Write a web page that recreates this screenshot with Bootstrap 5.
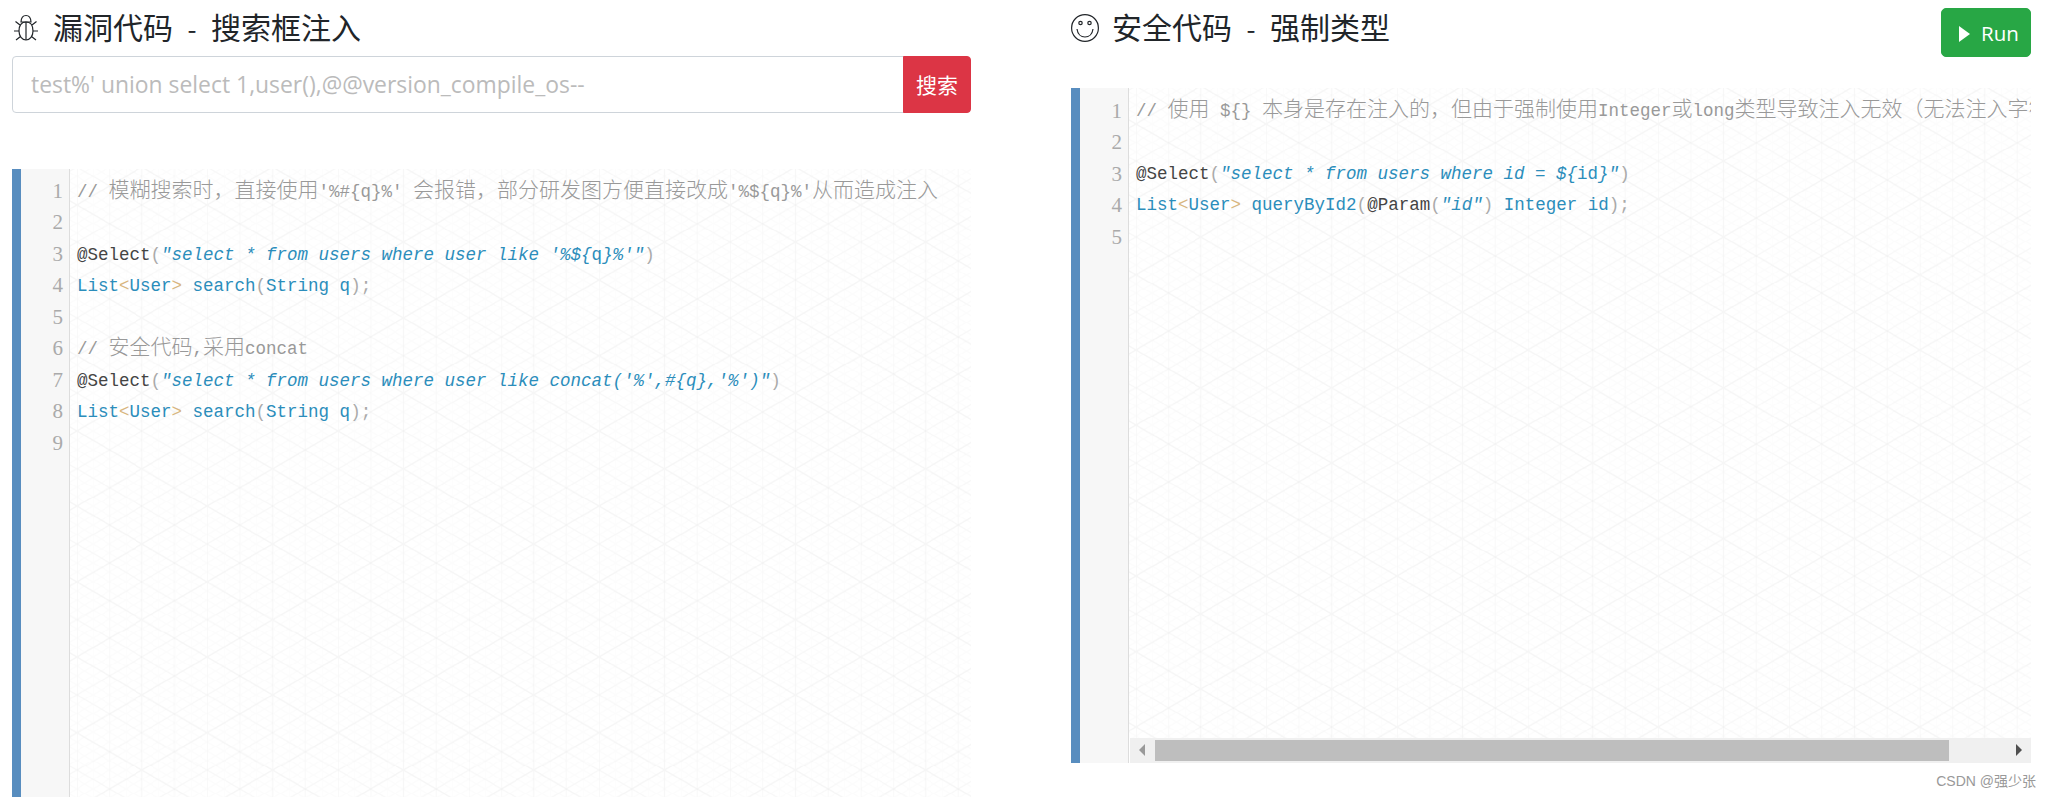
<!DOCTYPE html>
<html lang="zh"><head><meta charset="utf-8"><title>SQL</title>
<link href="https://cdn.jsdelivr.net/npm/bootstrap@5.3.0/dist/css/bootstrap.min.css" rel="stylesheet">
<style>
html,body{height:797px;overflow:hidden;background:#fff}
body{font-family:"Open Sans","Noto Sans CJK SC",sans-serif;color:#212529}
.page-wrap{padding:0 21px 0 12px;gap:100px}
.pane{flex:1 1 0;min-width:0}
.pane-left{flex:0 0 959px}
.pane-title{font-size:30px;line-height:40px;font-weight:400;margin:0;padding-top:6px;height:56px;font-family:"Noto Sans CJK SC",sans-serif;white-space:pre;color:#212529}
.pane-title svg{margin:-6px 14px 0 1px;vertical-align:middle}
.dash{margin:0 14.500px;font-size:26px}
.right-title{padding-top:6px;height:88px}
.right-title svg{margin-left:0;margin-right:13px}
.search-box{height:57px;width:100%}
.search-box .form-control{font-size:22.900px;border-color:#ced4da;border-radius:4px 0 0 4px;padding:2px 18px 0;font-family:"Open Sans",sans-serif}
.search-box .form-control::placeholder{color:#bbb}
.search-box .btn{width:68px;font-size:21px;padding:0;border-radius:0 4px 4px 0;font-family:"Noto Sans CJK SC",sans-serif;--bs-btn-bg:#dc3545;--bs-btn-border-color:#dc3545}
.run-btn{width:90px;height:49px;font-size:20.500px;padding:1px 0 0 6px;background:#28a745;border-color:#28a745;border-radius:5px;position:absolute;right:0;top:8px;font-family:"Open Sans",sans-serif}
.run-btn svg{margin:-2px 11px 0 0}
.code-editor{border-left:9px solid #588dbf;background-color:#fff;overflow:hidden;font-family:"Liberation Mono",monospace;font-size:17.500px;line-height:31.500px;color:#888}
.left-editor{margin-top:56px;height:640px}
.right-editor{height:675px}
.gutter{width:49px;flex:none;background:#f7f7f7;border-right:1px solid #ddd;text-align:right;padding-right:6px;color:#aaa;font-family:"Liberation Serif",serif;font-size:21px}
.code-area{flex:1 1 0;min-width:0;padding-left:7px;overflow:hidden;background-position:6.670px 35.700px;background-image:url("data:image/svg+xml,%3Csvg xmlns='http://www.w3.org/2000/svg' width='130.67' height='75.44'%3E%3Cg stroke='%23000' fill='none'%3E%3Cpath stroke-opacity='.024' stroke-width='1.3' d='M0 0V75.44M65.33 0V75.44M0 0L130.67 75.44M130.67 0L0 75.44'/%3E%3Cpath stroke-opacity='.014' d='M32.67 0V75.44M98 0V75.44M0 37.72L65.33 75.44M65.33 0L130.67 37.72M0 37.72L65.33 0M65.33 75.44L130.67 37.72'/%3E%3C/g%3E%3C/svg%3E"),url("data:image/svg+xml,%3Csvg xmlns='http://www.w3.org/2000/svg' width='16.33' height='9.43'%3E%3Cpath stroke='%23000' stroke-opacity='.01' fill='none' d='M0 0V9.43M0 0L16.33 9.43M16.33 0L0 9.43'/%3E%3C/svg%3E")}
.pad-l{padding-top:7.500px}.pad-r{padding-top:7.500px}
.gutter.pad-l{padding-top:6.500px}
.code-line{height:31.500px;white-space:pre}
.zh{font-family:"Noto Sans CJK SC",sans-serif;font-size:21px;font-weight:300;line-height:1}
.tok-c{color:#999}
.tok-a{color:#444}
.tok-p{color:#aaa}
.tok-k{color:#2b8dbb}
.tok-s{color:#2b8dbb;font-style:italic}
.tok-u{font-style:normal}
.tok-b{color:#d8b67f}
.code-col{flex:1 1 0;min-width:0}
.fake-scroll{height:25px;background:#f0f0f0;margin-left:1px;padding:2px 0}
.fake-scroll .thumb-bar{flex:1 1 0;background:#bebebe;margin:0 82px 0 25px}
.arrow-l,.arrow-r{width:0;height:0;border-style:solid;border-width:6px 0 6px 6px;border-color:transparent transparent transparent #505050;position:absolute;top:6px}
.arrow-l{border-width:6px 6px 6px 0;border-color:transparent #999 transparent transparent;left:9px}
.arrow-r{right:9px}
.wm{font-size:14px;line-height:18px;color:#999;text-align:right;margin:9px -5px 0 0;font-family:"Liberation Sans","Noto Sans CJK SC",sans-serif}
</style></head>
<body>
<div class="d-flex page-wrap">
<section class="pane pane-left">
<h1 class="pane-title"><svg width="26" height="28" viewBox="0 0 26 28" fill="none" stroke="#212529" stroke-width="1.2"><path d="M8 8c.2-4 2.200-6.500 5-6.500s4.800 2.500 5 6.500z"/><path d="M13 8c-5 0-7 4-7 9 0 5 3 9 7 9s7-4 7-9c0-5-2-9-7-9z"/><path d="M13 8v18M6 17H1M20 17h5M7 11 2.500 7.500M19 11l4.500-3.500M7.500 22.500 3 26M18.500 22.500 23 26"/></svg>漏洞代码<span class="dash">-</span>搜索框注入</h1>
<div class="input-group search-box"><input class="form-control" type="text" placeholder="test%' union select 1,user(),@@version_compile_os--"><button class="btn btn-danger" type="button">搜索</button></div>
<div class="code-editor left-editor d-flex">
<div class="gutter pad-l"><div class="code-line">1</div><div class="code-line">2</div><div class="code-line">3</div><div class="code-line">4</div><div class="code-line">5</div><div class="code-line">6</div><div class="code-line">7</div><div class="code-line">8</div><div class="code-line">9</div></div>
<div class="code-area pad-l">
<div class="code-line tok-c">// <span class="zh">模糊搜索时，直接使用</span>'%#{q}%' <span class="zh">会报错，部分研发图方便直接改成</span>'%${q}%'<span class="zh">从而造成注入</span></div>
<div class="code-line"></div>
<div class="code-line"><span class="tok-a">@Select</span><span class="tok-p">(</span><span class="tok-s">"select * from users where user like '%${<span class="tok-u">q</span>}%'"</span><span class="tok-p">)</span></div>
<div class="code-line"><span class="tok-k">List</span><span class="tok-b">&lt;</span><span class="tok-k">User</span><span class="tok-b">&gt;</span> <span class="tok-k">search</span><span class="tok-p">(</span><span class="tok-k">String q</span><span class="tok-p">);</span></div>
<div class="code-line"></div>
<div class="code-line tok-c">// <span class="zh">安全代码</span>,<span class="zh">采用</span>concat</div>
<div class="code-line"><span class="tok-a">@Select</span><span class="tok-p">(</span><span class="tok-s">"select * from users where user like concat('%',#{q},'%')"</span><span class="tok-p">)</span></div>
<div class="code-line"><span class="tok-k">List</span><span class="tok-b">&lt;</span><span class="tok-k">User</span><span class="tok-b">&gt;</span> <span class="tok-k">search</span><span class="tok-p">(</span><span class="tok-k">String q</span><span class="tok-p">);</span></div>
<div class="code-line"></div>
</div></div>
</section>
<section class="pane position-relative">
<h1 class="pane-title right-title"><svg width="28" height="28" viewBox="0 0 28 28" fill="none" stroke="#212529" stroke-width="1.2"><circle cx="14" cy="14" r="13.400"/><circle cx="9.500" cy="9" r="1.700"/><circle cx="18.500" cy="9" r="1.700"/><path d="M6 15c.6 5 4 8 8 8s7.400-3 8-8"/></svg>安全代码<span class="dash">-</span>强制类型</h1>
<button class="btn btn-success run-btn" type="button"><svg width="11" height="16" viewBox="0 0 11 16"><path d="M0 0l11 8-11 8z" fill="#fff"/></svg>Run</button>
<div class="code-editor right-editor d-flex">
<div class="gutter pad-r"><div class="code-line">1</div><div class="code-line">2</div><div class="code-line">3</div><div class="code-line">4</div><div class="code-line">5</div></div>
<div class="code-col d-flex flex-column">
<div class="code-area pad-r flex-grow-1">
<div class="code-line tok-c">// <span class="zh">使用</span> ${} <span class="zh">本身是存在注入的，但由于强制使用</span>Integer<span class="zh">或</span>long<span class="zh">类型导致注入无效（无法注入字符串）</span></div>
<div class="code-line"></div>
<div class="code-line"><span class="tok-a">@Select</span><span class="tok-p">(</span><span class="tok-s">"select * from users where id = ${<span class="tok-u">id</span>}"</span><span class="tok-p">)</span></div>
<div class="code-line"><span class="tok-k">List</span><span class="tok-b">&lt;</span><span class="tok-k">User</span><span class="tok-b">&gt;</span> <span class="tok-k">queryById2</span><span class="tok-p">(</span><span class="tok-a">@Param</span><span class="tok-p">(</span><span class="tok-s">"id"</span><span class="tok-p">)</span> <span class="tok-k">Integer id</span><span class="tok-p">);</span></div>
<div class="code-line"></div>
</div>
<div class="fake-scroll d-flex position-relative"><span class="arrow-l"></span><div class="thumb-bar"></div><span class="arrow-r"></span></div>
</div></div>
<div class="wm">CSDN @强少张</div>
</section>
</div>
</body></html>
